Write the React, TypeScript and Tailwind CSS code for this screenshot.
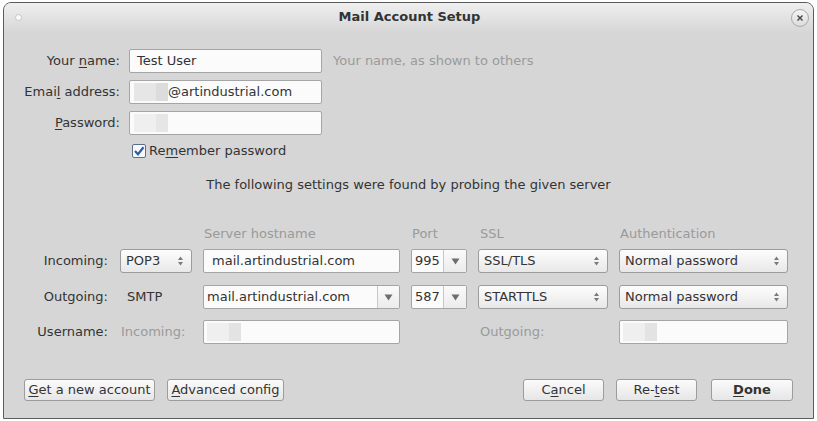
import clsx from 'clsx'

const font = "font-['DejaVu_Sans','Liberation_Sans',sans-serif]"

const U = ({ children }: { children: string }) => <span className='underline underline-offset-2'>{children}</span>

const Spinner = () => (
    <svg width='7' height='12' viewBox='0 0 7 12'>
        <path d='M3.5 1.5 L6 5 L1 5 Z' fill='#7a7a7a' />
        <path d='M3.5 10.5 L6 7 L1 7 Z' fill='#7a7a7a' />
    </svg>
)

const Down = () => (
    <svg width='9' height='7' viewBox='0 0 9 7'>
        <path d='M0.5 0.5 L8.5 0.5 L4.5 6.5 Z' fill='#6e6e6e' />
    </svg>
)

const Redacted = ({ a = '#e6e6e6', b = '#dcdcdc' }: { a?: string, b?: string }) => (
    <div className='flex h-[18px]'>
        <div className='w-[22px]' style={{ background: a }} />
        <div className='w-[12px]' style={{ background: b }} />
    </div>
)

const Input = ({ children, className }: { children?: React.ReactNode, className?: string }) => (
    <div className={clsx('h-[24px] flex items-center px-[4px] bg-[#fbfbfb] border border-[#a5a5a5] rounded-[2px] text-[#333]', className)}>
        {children}
    </div>
)

const Select = ({ value, className }: { value: string, className?: string }) => (
    <div className={clsx('h-[24px] flex items-center justify-between pl-[5px] pr-[7px] border border-[#9c9c9c] rounded-[3px] bg-linear-to-b from-[#fdfdfd] to-[#e8e8e8] text-[#333]', className)}>
        <span>{value}</span>
        <Spinner />
    </div>
)

const Combo = ({ value, className, arrowW }: { value: string, className?: string, arrowW: string }) => (
    <div className={clsx('h-[24px] flex items-stretch border border-[#a5a5a5] rounded-[2px] bg-[#fbfbfb] text-[#333]', className)}>
        <div className='flex-1 flex items-center pl-[3px]'>{value}</div>
        <div className={clsx('flex items-center justify-center border-l border-[#c8c8c8] bg-linear-to-b from-[#fafafa] to-[#ececec]', arrowW)}>
            <Down />
        </div>
    </div>
)

const Button = ({ children, className }: { children: React.ReactNode, className?: string }) => (
    <div className={clsx('h-[22px] flex items-center justify-center border border-[#9c9c9c] rounded-[3px] bg-linear-to-b from-[#fbfbfb] to-[#e6e6e6] text-[#333]', className)}>
        {children}
    </div>
)

export default function App() {
    return (
        <div className={clsx('w-[817px] h-[421px] bg-white pt-[2px] pl-[3px] text-[13px] leading-[16px]', font)}>
            <div className='w-[811px] h-[417px] border border-[#5c5c5c] rounded-t-[8px] bg-[#d6d6d6] flex flex-col overflow-hidden'>
                {/* title bar */}
                <div className='relative h-[30px] shrink-0 flex items-center justify-center bg-linear-to-b from-[#efefef] to-[#d6d6d6]'>
                    <div className='absolute left-[11px] top-[11px] w-[7px] h-[7px] rounded-full bg-[#fafafa] border border-[#c6c6c6]' />
                    <span className='font-bold text-[#333] ml-[2px] mb-[2px]'>Mail Account Setup</span>
                    <div className='absolute right-[4px] top-[6px] w-[18px] h-[18px] rounded-full border border-[#a8a8a8] bg-linear-to-b from-[#f4f4f4] to-[#dcdcdc] flex items-center justify-center'>
                        <svg width='8' height='8' viewBox='0 0 8 8'>
                            <path d='M1.5 1.5 L6.5 6.5 M6.5 1.5 L1.5 6.5' stroke='#444' strokeWidth='1.4' />
                        </svg>
                    </div>
                </div>

                {/* account fields */}
                <div className='flex flex-col gap-[7px] mt-[16px] text-[#333]'>
                    <div className='flex items-center gap-[9px]'>
                        <div className='w-[116px] text-right'>Your <U>n</U>ame:</div>
                        <Input className='w-[193px] pl-[7px]'>Test User</Input>
                        <div className='ml-[2px] text-[#9a9a9a]'>Your name, as shown to others</div>
                    </div>
                    <div className='flex items-center gap-[9px]'>
                        <div className='w-[116px] text-right'>Emai<U>l</U> address:</div>
                        <Input className='w-[193px]'>
                            <Redacted />
                            <span>@artindustrial.com</span>
                        </Input>
                    </div>
                    <div className='flex items-center gap-[9px]'>
                        <div className='w-[116px] text-right'><U>P</U>assword:</div>
                        <Input className='w-[193px]'>
                            <Redacted a='#efefef' b='#e6e6e6' />
                        </Input>
                    </div>
                </div>
                <div className='flex items-center mt-[8px] pl-[128px] gap-[3px] text-[#333]'>
                    <svg width='14' height='14' viewBox='0 0 14 14'>
                        <rect x='0.5' y='0.5' width='13' height='13' rx='1.5' fill='#f6f8fb' stroke='#5a6e8a' />
                        <path d='M3 7 L6 10.2 L11.5 3.2' fill='none' stroke='#2f5f9e' strokeWidth='2.2' />
                    </svg>
                    <span>Re<U>m</U>ember password</span>
                </div>

                <div className='mt-[18px] text-center text-[#333]'>The following settings were found by probing the given server</div>

                {/* server table */}
                <div className='mt-[33px] grid grid-cols-[105px_72px_197px_56px_130px_169px] gap-x-[11px] items-center text-[#333]'>
                    <div />
                    <div />
                    <div className='pl-[1px] text-[#9a9a9a]'>Server hostname</div>
                    <div className='pl-[1px] text-[#9a9a9a]'>Port</div>
                    <div className='pl-[2px] text-[#9a9a9a]'>SSL</div>
                    <div className='pl-[1px] text-[#9a9a9a]'>Authentication</div>

                    <div className='mt-[7px] text-right pr-[1px]'>Incoming:</div>
                    <Select value='POP3' className='mt-[7px]' />
                    <Input className='mt-[7px] pl-[8px]'>mail.artindustrial.com</Input>
                    <Combo value='995' className='mt-[7px]' arrowW='w-[23px]' />
                    <Select value='SSL/TLS' className='mt-[7px]' />
                    <Select value='Normal password' className='mt-[7px]' />

                    <div className='mt-[12px] text-right pr-[1px]'>Outgoing:</div>
                    <div className='mt-[12px] pl-[7px]'>SMTP</div>
                    <Combo value='mail.artindustrial.com' className='mt-[12px]' arrowW='w-[22px]' />
                    <Combo value='587' className='mt-[12px]' arrowW='w-[23px]' />
                    <Select value='STARTTLS' className='mt-[12px]' />
                    <Select value='Normal password' className='mt-[12px]' />

                    <div className='mt-[11px] text-right pr-[1px]'>Username:</div>
                    <div className='mt-[11px] pl-[1px] text-[#9a9a9a]'>Incoming:</div>
                    <Input className='mt-[11px] pl-[3px]'>
                        <Redacted a='#efefef' b='#e3e3e3' />
                    </Input>
                    <div className='mt-[11px]' />
                    <div className='mt-[11px] pl-[2px] text-[#9a9a9a]'>Outgoing:</div>
                    <Input className='mt-[11px] pl-[3px]'>
                        <Redacted a='#efefef' b='#e3e3e3' />
                    </Input>
                </div>

                {/* buttons */}
                <div className='mt-auto mb-[17px] px-[20px] flex items-center justify-between'>
                    <div className='flex gap-[12px]'>
                        <Button className='w-[131px]'><span><U>G</U>et a new account</span></Button>
                        <Button className='w-[117px]'><span><U>A</U>dvanced config</span></Button>
                    </div>
                    <div className='flex gap-[12px]'>
                        <Button className='w-[81px]'><span>C<U>a</U>ncel</span></Button>
                        <Button className='w-[81px] border-[#6d9bd1]'><span>Re-<U>t</U>est</span></Button>
                        <Button className='w-[82px] ml-[2px] font-bold'><span><U>D</U>one</span></Button>
                    </div>
                </div>
            </div>
        </div>
    )
}
